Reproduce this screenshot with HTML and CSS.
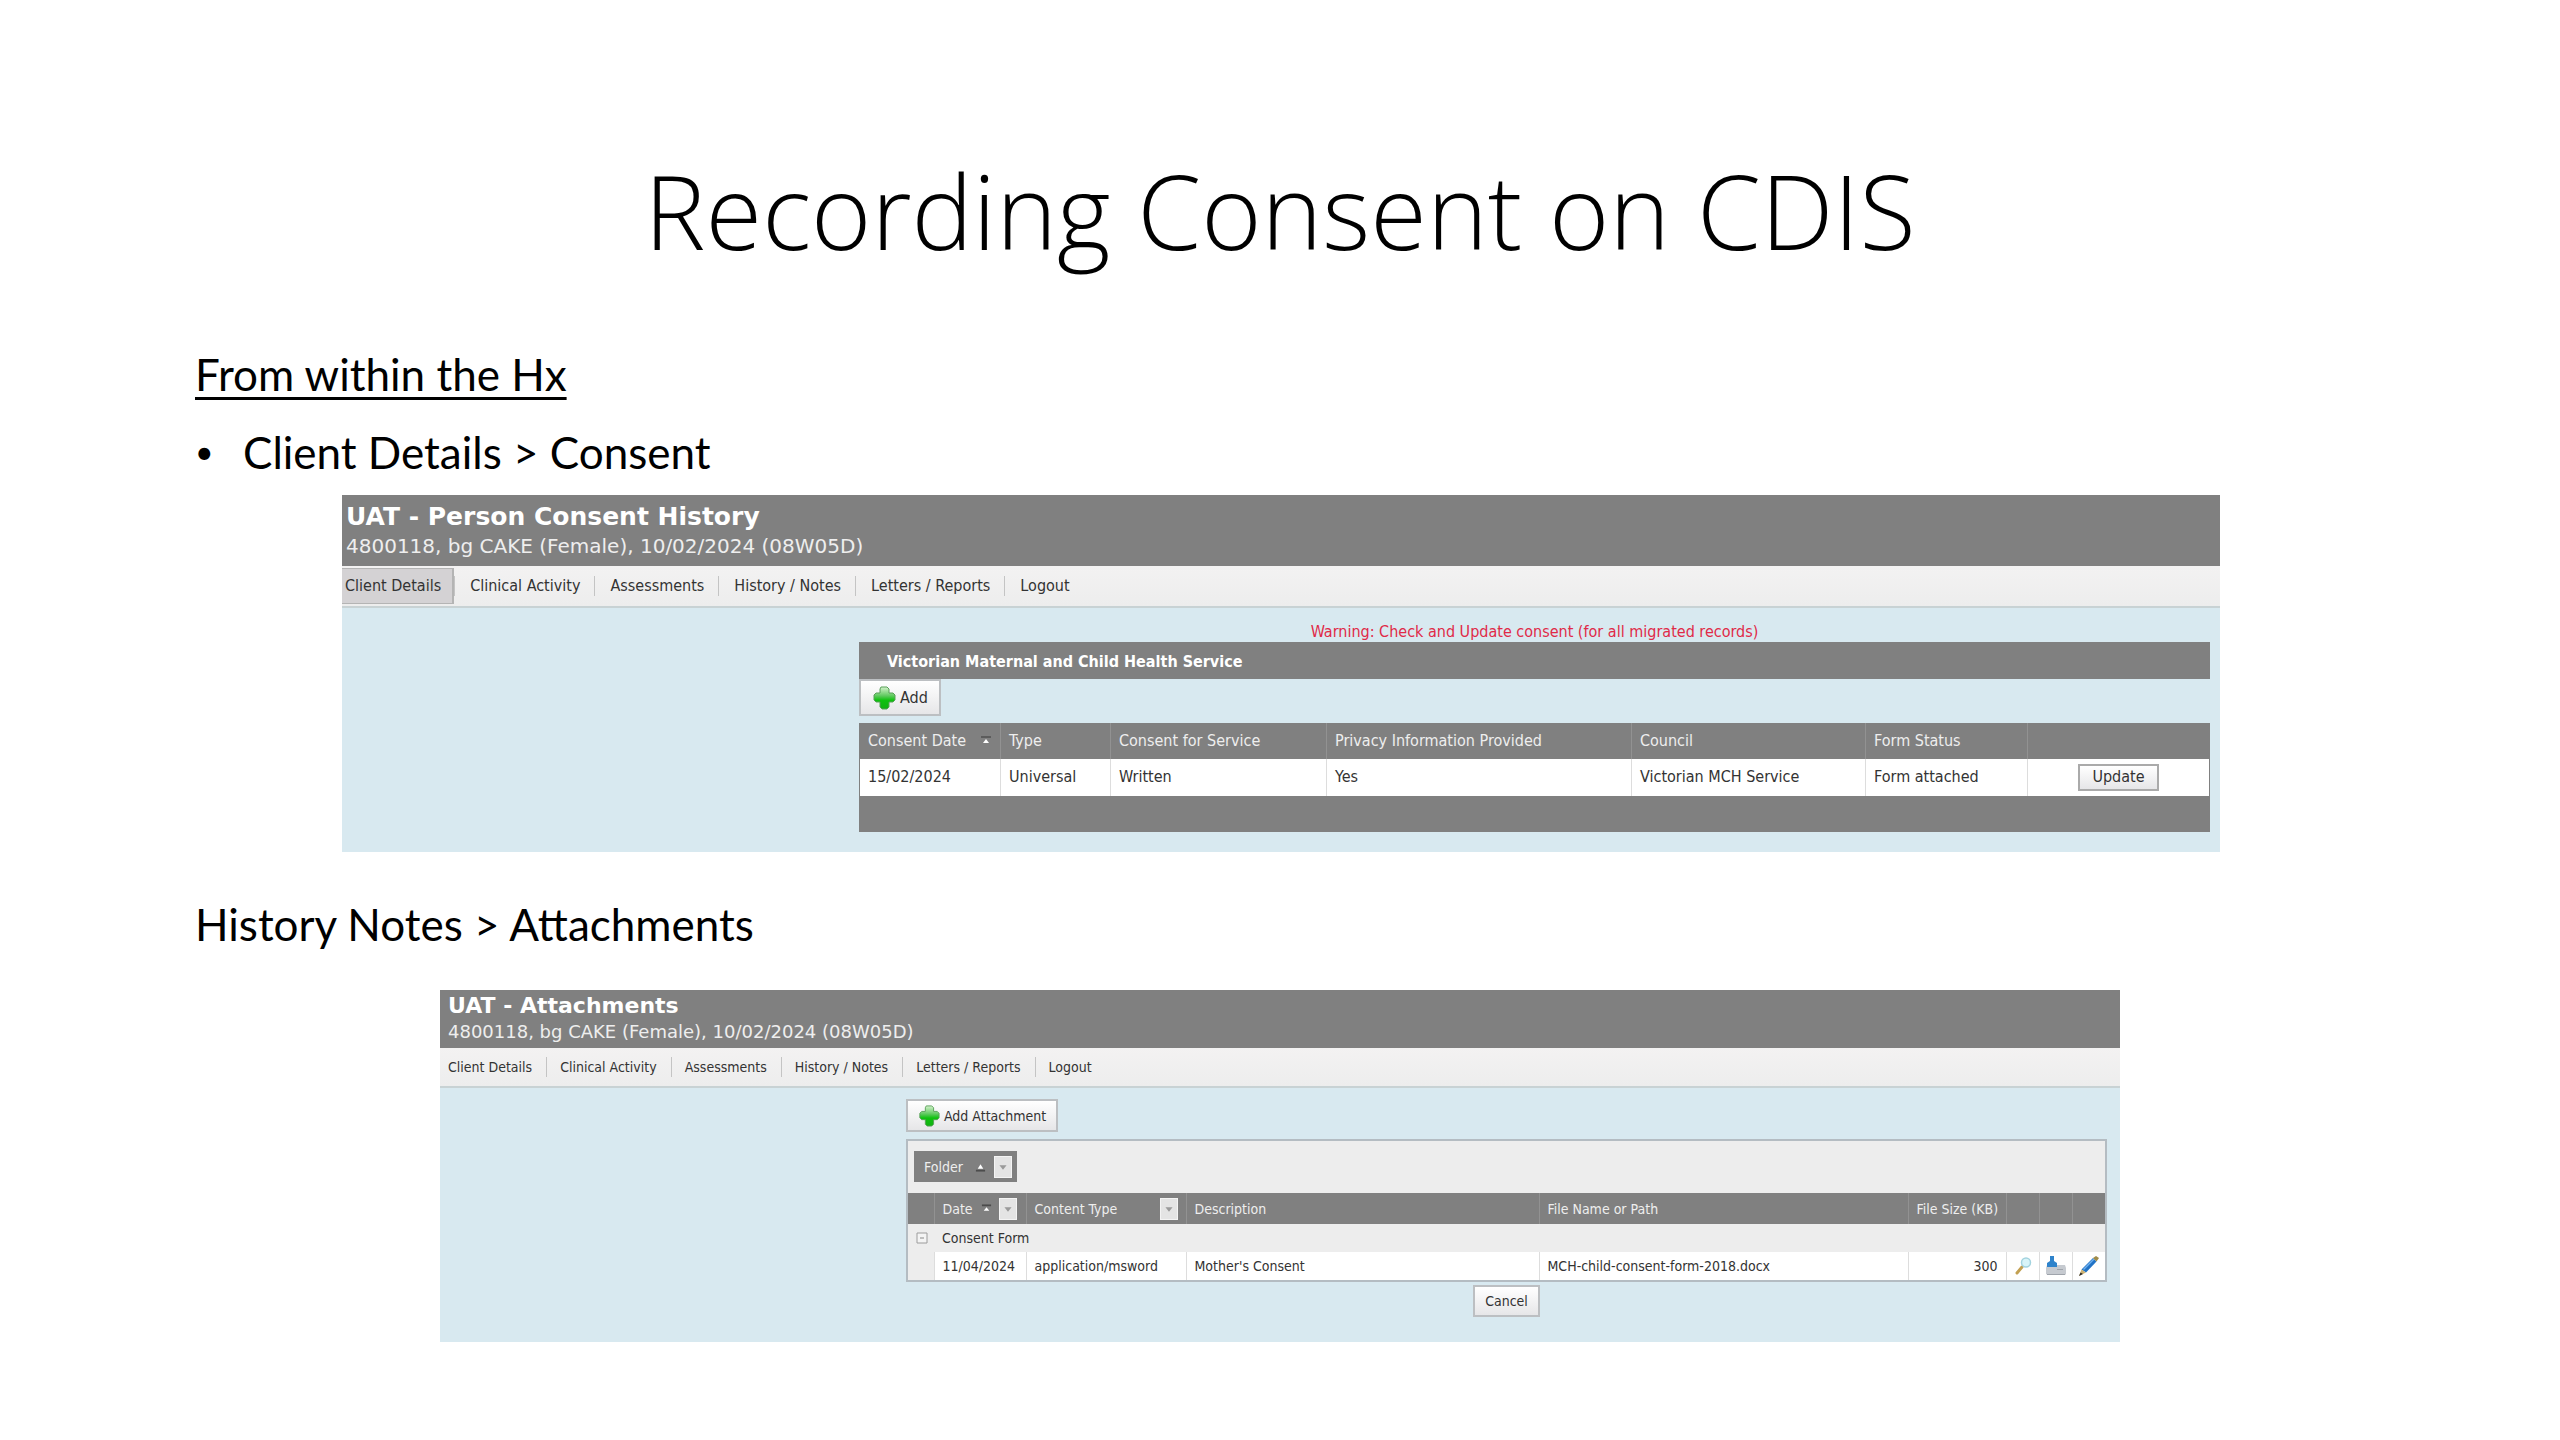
FILE: index.html
```
<!DOCTYPE html>
<html lang="en">
<head>
	<meta charset="utf-8" />
	<title>Recording Consent on CDIS</title>
	<link rel="stylesheet" href="styles.css">
</head>
<body>
	<!-- Shared icons -->
	<svg class="defs" width="0" height="0">
		<defs>
			<linearGradient id="green" x1="0" y1="0" x2="0" y2="1">
				<stop offset="0" stop-color="#d4f2cc" />
				<stop offset="0.4" stop-color="#5fc95f" />
				<stop offset="0.6" stop-color="#0fc20f" />
				<stop offset="1" stop-color="#12b012" />
			</linearGradient>
		</defs>
		<symbol id="plus" viewBox="0 0 24 24">
			<path d="M9 1h6l2 2v4h4l2 2v5l-2 2h-4v5l-2 2h-5l-2-2v-5h-4l-2-2v-5l2-2h4v-4z" fill="url(#green)" stroke="#58a058" stroke-linejoin="round" />
		</symbol>
		<symbol id="filter" viewBox="0 0 18 22">
			<path d="M5 9h8l-4 5z" fill="#9a9a9a" />
		</symbol>
	</svg>

	<h1>Recording Consent on CDIS</h1>

	<h2 class="underlined">From within the Hx</h2>
	<ul class="steps">
		<li>Client Details &gt; Consent</li>
	</ul>

	<!-- Consent history screen -->
	<div class="screen consent">
		<div class="head">
			<h3>UAT - Person Consent History</h3>
			<p>4800118, bg CAKE (Female), 10/02/2024 (08W05D)</p>
		</div>
		<nav class="menu">
			<a class="active" href="#">Client Details</a>
			<a href="#">Clinical Activity</a>
			<a href="#">Assessments</a>
			<a href="#">History / Notes</a>
			<a href="#">Letters / Reports</a>
			<a href="#">Logout</a>
		</nav>
		<div class="content">
			<p class="warning">Warning: Check and Update consent (for all migrated records)</p>
			<h4>Victorian Maternal and Child Health Service</h4>
			<button class="add" type="button"><svg class="plus"><use href="#plus" /></svg>Add</button>
			<table>
				<colgroup>
					<col class="c-date"><col class="c-type"><col class="c-service"><col class="c-privacy"><col class="c-council"><col class="c-status"><col>
				</colgroup>
				<thead>
					<tr>
						<th><span class="sortable">Consent Date <svg class="sort" viewBox="0 0 12 12"><path d="M1 1h10v2h-10z" fill="#5c5c5c" /><path d="M3 8l3-4 3 4z" fill="#fff" /></svg></span></th>
						<th>Type</th>
						<th>Consent for Service</th>
						<th>Privacy Information Provided</th>
						<th>Council</th>
						<th>Form Status</th>
						<th></th>
					</tr>
				</thead>
				<tbody>
					<tr>
						<td>15/02/2024</td>
						<td>Universal</td>
						<td>Written</td>
						<td>Yes</td>
						<td>Victorian MCH Service</td>
						<td>Form attached</td>
						<td class="center"><button class="update" type="button">Update</button></td>
					</tr>
				</tbody>
				<tfoot>
					<tr><td colspan="7"></td></tr>
				</tfoot>
			</table>
		</div>
	</div>

	<h2>History Notes &gt; Attachments</h2>

	<!-- Attachments screen -->
	<div class="screen attachments">
		<div class="head">
			<h3>UAT - Attachments</h3>
			<p>4800118, bg CAKE (Female), 10/02/2024 (08W05D)</p>
		</div>
		<nav class="menu">
			<a href="#">Client Details</a>
			<a href="#">Clinical Activity</a>
			<a href="#">Assessments</a>
			<a href="#">History / Notes</a>
			<a href="#">Letters / Reports</a>
			<a href="#">Logout</a>
		</nav>
		<div class="content">
			<button class="add" type="button"><svg class="plus"><use href="#plus" /></svg>Add Attachment</button>
			<div class="grid">
				<div class="group-bar">
					<div class="group">Folder
						<svg class="sort" viewBox="0 0 12 12"><path d="M1 9h10v2h-10z" fill="#4c4c4c" /><path d="M3 8l3-5 3 5z" fill="#fff" /></svg>
						<button class="filter" type="button" aria-label="Filter folder"><svg><use href="#filter" /></svg></button>
					</div>
				</div>
				<table>
					<colgroup>
						<col class="c-toggle"><col class="c-date"><col class="c-type"><col class="c-description"><col><col class="c-size"><col class="c-icon"><col class="c-icon"><col class="c-icon">
					</colgroup>
					<thead>
						<tr>
							<th></th>
							<th><span class="sortable">Date <svg class="sort" viewBox="0 0 12 12"><path d="M1 1h10v2h-10z" fill="#4c4c4c" /><path d="M3 8l3-4 3 4z" fill="#fff" /></svg><button class="filter" type="button" aria-label="Filter date"><svg><use href="#filter" /></svg></button></span></th>
							<th><span class="sortable">Content Type <button class="filter" type="button" aria-label="Filter content type"><svg><use href="#filter" /></svg></button></span></th>
							<th>Description</th>
							<th>File Name or Path</th>
							<th>File Size (KB)</th>
							<th></th>
							<th></th>
							<th></th>
						</tr>
					</thead>
					<tbody>
						<tr class="folder">
							<td><button class="toggle" type="button" aria-label="Collapse"><svg viewBox="0 0 12 12"><path d="M1 1h10v10h-10z" fill="#f4f4f4" stroke="#9c9c9c" /><path d="M4 6h4" stroke="#888" /></svg></button></td>
							<td colspan="8">Consent Form</td>
						</tr>
						<tr>
							<td class="indent"></td>
							<td>11/04/2024</td>
							<td>application/msword</td>
							<td>Mother's Consent</td>
							<td>MCH-child-consent-form-2018.docx</td>
							<td class="right">300</td>
							<td class="icon"><a href="#" aria-label="View"><svg viewBox="0 0 20 20">
								<path d="M4 17l5-6" stroke="#c2a052" stroke-width="3" stroke-linecap="round" />
								<circle cx="13" cy="6.500" r="4.500" fill="#d8f4f8" stroke="#a3d3df" stroke-width="1.500" />
							</svg></a></td>
							<td class="icon"><a href="#" aria-label="Download"><svg viewBox="0 0 20 20">
								<path d="M1 9h18l1 3v6l-1 1H2l-2-1v-6z" fill="#c6cad0" />
								<path d="M1 18.500h18M11 13.500h6" stroke="#9fa4ab" />
								<path d="M4 0h4v5l3 2v4H1V7l3-2z" fill="#2f83cb" />
							</svg></a></td>
							<td class="icon"><a href="#" aria-label="Edit"><svg viewBox="0 0 20 20">
								<path d="M2.500 13.500L14 2l3.500 3.500L7 16.500z" fill="#2173c6" />
								<path d="M4.500 13.500L15 3" stroke="#6fb0ee" stroke-width="1.500" />
								<path d="M14 2l3-2 3 2-2.500 3.500z" fill="#a08b48" />
								<path d="M2.500 13.500L0 20l7-3.500z" fill="#cdb273" />
								<path d="M1.500 16.500L0 20l4-2z" fill="#2c2c2c" />
							</svg></a></td>
						</tr>
					</tbody>
				</table>
			</div>
			<button class="cancel" type="button">Cancel</button>
		</div>
	</div>
</body>
</html>
```
FILE: styles.css
```
* { box-sizing: border-box; }
body {
	margin: 0;
	background: #fff;
	color: #000;
	font-family: Lato, "Open Sans", sans-serif;
}
h1, h2, h3, h4, p, ul { margin: 0; padding: 0; font-weight: normal; }
.defs { display: block; }

/* Slide text */
h1 { padding-top: 148px; font-family: "Open Sans", sans-serif; font-size: 103px; line-height: 124px; font-weight: 300; text-align: center; }
h2, .steps { margin-left: 195px; font-size: 44px; line-height: 52px; }
.underlined { margin-top: 76px; text-decoration: underline; text-decoration-thickness: 3px; text-underline-offset: 6px; }
.steps { margin-top: 26px; list-style: none; }
.steps li { display: flex; }
.steps li:before { content: "\2022"; width: 48px; font-size: 32px; }

/* Application screens */
.screen { background: #d8e9f0; color: #333; font-family: "DejaVu Sans Condensed", "DejaVu Sans", sans-serif; font-size: 16px; line-height: 20px; }
.head { background: #808080; color: #fff; font-family: "DejaVu Sans", Verdana, sans-serif; }
.head h3 { font-weight: bold; }
.head p { color: #eee; }
.menu { display: flex; align-items: center; background: linear-gradient(#f3f2f2, #ededed); border-bottom: 2px solid #c8d2d4; }
.menu a { display: flex; align-items: center; color: #333; text-decoration: none; white-space: nowrap; }
.menu a + a:before { content: ""; height: 20px; border-left: 1px solid #c4c4c4; }

button { margin: 0; padding: 0; font: inherit; color: #333; background: linear-gradient(#fff, #e6e6e8); border: 2px solid #bcbfc2; }
.add { display: flex; align-items: center; }
.plus { width: 24px; height: 24px; }
.sort { width: 12px; height: 12px; }
.sortable { display: flex; align-items: center; justify-content: space-between; }

table { width: 100%; table-layout: fixed; border-collapse: collapse; }
th { padding: 0 8px; background: #808080; color: #eee; font-weight: normal; text-align: left; white-space: nowrap; border-left: 1px solid #929292; }
td { padding: 0 8px; background: #fff; white-space: nowrap; border-left: 1px solid #ddd; }
th:first-child, td:first-child { border-left: 0; }
.center { text-align: center; }
.right { text-align: right; }

/* Person consent history */
.consent { margin: 17px 340px 0 342px; padding-bottom: 20px; }
.consent .head { height: 71px; padding: 6px 4px; }
.consent h3 { font-size: 25px; line-height: 32px; }
.consent .head p { font-size: 20px; line-height: 26px; }
.consent .menu { height: 42px; }
.consent .menu a { height: 36px; padding-right: 14px; }
.consent .menu a + a:before { margin-right: 15px; }
.consent .menu .active { padding: 0 11px 0 3px; background: #d4d2d4; border: 1px solid #b4b4b4; border-width: 1px 2px 1px 0; }
.consent .content { margin: 0 10px 0 517px; padding-top: 14px; }
.warning { color: #e02a48; text-align: center; }
.consent h4 { height: 37px; padding-left: 28px; background: #808080; color: #fff; font-weight: bold; line-height: 39px; }
.consent .add { height: 37px; padding: 0 11px; gap: 4px; }
.consent table { margin-top: 7px; border: 1px solid #808080; }
.consent th { height: 35px; }
.consent td { height: 37px; }
.consent tfoot td { height: 36px; background: #808080; }
.consent .c-date { width: 141px; }
.consent .c-type { width: 110px; }
.consent .c-service { width: 216px; }
.consent .c-privacy { width: 305px; }
.consent .c-council { width: 234px; }
.consent .c-status { width: 162px; }
.update { height: 27px; padding: 0 12px; border: 2px solid #aaa; line-height: 20px; }

/* Attachments */
.screen.consent + h2 { margin-top: 46px; }
.attachments { margin: 40px 440px 0 440px; padding-bottom: 25px; font-size: 14px; }
.attachments .head { height: 58px; padding: 2px 8px; }
.attachments h3 { font-size: 22px; line-height: 28px; }
.attachments .head p { font-size: 18px; line-height: 24px; }
.attachments .menu { height: 40px; padding-left: 8px; }
.attachments .menu a { padding-right: 14px; }
.attachments .menu a + a:before { margin-right: 13px; }
.attachments .content { margin: 0 13px 0 466px; padding-top: 11px; }
.attachments .add { height: 33px; padding: 0 10px; gap: 4px; }
.attachments .plus { width: 22px; height: 22px; }
.grid { margin-top: 7px; background: #ededed; border: 2px solid #b4bcc2; }
.group-bar { display: flex; padding: 10px 6px 11px; }
.group { display: flex; align-items: center; gap: 8px; height: 31px; padding: 0 5px 0 10px; background: #808080; color: #eee; }
.group .sort { margin-left: 4px; }
.filter { width: 18px; height: 22px; background: #e4e4e4; border: 1px solid #f4f4f4; }
.filter svg, .toggle svg { display: block; width: 100%; height: 100%; }
.attachments th { height: 31px; }
.attachments td { height: 28px; }
.attachments .sort { width: 11px; height: 12px; }
.folder td { background: #ededed; border: 0; }
.folder td:first-child { padding: 0 8px; }
.toggle { display: block; width: 12px; height: 12px; background: none; border: 0; }
.attachments td.indent { background: #ededed; }
.attachments .c-toggle { width: 26px; }
.attachments .c-date { width: 92px; }
.attachments .c-type { width: 160px; }
.attachments .c-description { width: 353px; }
.attachments .c-size { width: 98px; }
.attachments .c-icon { width: 33px; }
.attachments .icon { padding: 0 6px; }
.icon a, .icon svg { display: block; width: 20px; height: 20px; }
.cancel { display: block; height: 32px; margin: 3px auto 0; padding: 0 10px; }
```
